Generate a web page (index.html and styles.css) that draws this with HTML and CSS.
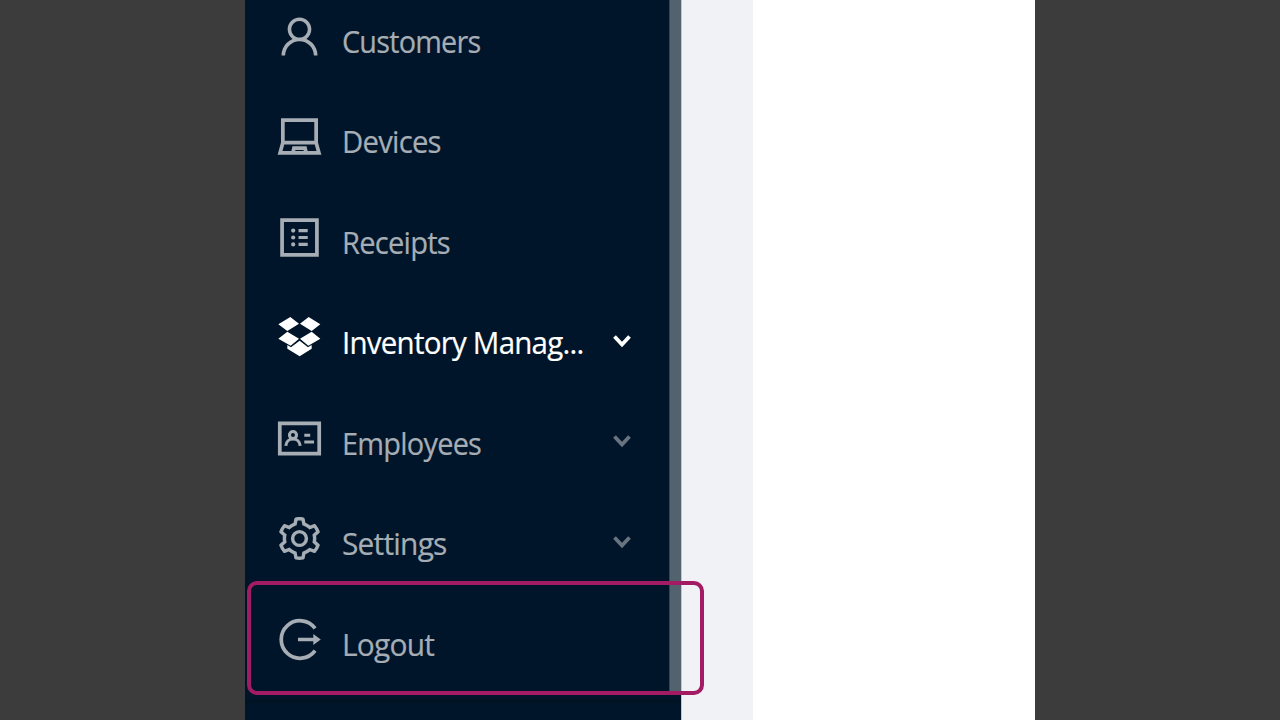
FILE: index.html
```html
<!DOCTYPE html>
<html lang="en">
<head>
<meta charset="utf-8">
<title>Menu</title>
<link rel="stylesheet" href="styles.css">
</head>
<body>
<div class="stage">
  <div class="app">
    <aside class="sidebar">
      <nav class="menu">
        <a class="item">
          <svg class="icon" viewBox="0 0 1024 1024"><path d="M858.5 763.6a374 374 0 00-80.6-119.5 375.63 375.63 0 00-119.5-80.6c-.4-.2-.8-.3-1.2-.5C719.5 518 760 444.7 760 362c0-137-111-248-248-248S264 225 264 362c0 82.7 40.5 156 102.8 201.1-.4.2-.8.3-1.2.5-44.8 18.9-85 46-119.5 80.6a375.63 375.63 0 00-80.6 119.5A371.7 371.7 0 00136 901.8a8 8 0 008 8.2h60c4.4 0 7.9-3.5 8-7.8 2-77.2 33-149.5 87.8-204.3 56.7-56.7 132-87.9 212.2-87.9s155.5 31.2 212.2 87.9C779 752.7 810 825 812 902.2c.1 4.4 3.6 7.8 8 7.8h60a8 8 0 008-8.2c-1-47.8-10.9-94.3-29.5-138.2zM512 534c-45.9 0-89.1-17.9-121.6-50.4S340 407.900 340 362c0-45.900 17.900-89.100 50.400-121.600S466.100 190 512 190s89.100 17.900 121.600 50.400S684 316.100 684 362c0 45.900-17.900 89.100-50.400 121.600S557.900 534 512 534z"/></svg>
          <span class="label customers">Customers</span>
        </a>
        <a class="item">
          <svg class="icon line" viewBox="0 0 1024 1024"><path d="M164 640V172h696v468zM164 640L106 852h812L860 640M376 846l20-90h232l20 90"/></svg>
          <span class="label devices">Devices</span>
        </a>
        <a class="item">
          <svg class="icon line" viewBox="0 0 1024 1024"><path d="M148 148h728v728H148z"/><path class="bars" d="M492 368h192M492 512h192M492 656h192"/><g class="dot"><circle cx="380" cy="368" r="44"/><circle cx="380" cy="512" r="44"/><circle cx="380" cy="656" r="44"/></g></svg>
          <span class="label receipts">Receipts</span>
        </a>
        <a class="item active">
          <svg class="icon" viewBox="0 0 147 147"><path d="M46 12l26 20-35 22L10 34zM101 12l35 22-26 20-35-22zM10 77l27-21 35 21-25 21zM136 77l-26-21-35 21 25 21zM74 83l25 20 11-7v11L74 130 37 107V96l11 7z"/></svg>
          <span class="label inventory">Inventory Manag...</span>
          <svg class="arrow" viewBox="0 0 20 14"><path d="M2.500 2.500L10 10.500l7.500-8"/></svg>
        </a>
        <a class="item">
          <svg class="icon line" viewBox="0 0 1024 1024"><path d="M100 196h824v632H100z"/><path class="bars" d="M612 446h124M612 586h204"/><circle class="bars" cx="376" cy="440" r="74"/><path class="bars" d="M226 664c8-86 68-142 150-142s142 56 150 142"/></svg>
          <span class="label employees">Employees</span>
          <svg class="arrow" viewBox="0 0 20 14"><path d="M2.500 2.500L10 10.500l7.500-8"/></svg>
        </a>
        <a class="item">
          <svg class="icon" viewBox="0 0 1024 1024"><path fill-rule="evenodd" d="M924.800 625.700l-65.500-56c3.100-19 4.700-38.400 4.700-57.800s-1.600-38.800-4.700-57.800l65.500-56a32.030 32.030 0 009.300-35.200l-.9-2.600a443.740 443.740 0 00-79.700-137.900l-1.800-2.100a32.120 32.120 0 00-35.100-9.500l-81.300 28.900c-30-24.600-63.500-44-99.700-57.600l-15.700-85a32.050 32.050 0 00-25.800-25.700l-2.700-.5c-52.100-9.400-106.900-9.400-159 0l-2.700.5a32.050 32.050 0 00-25.800 25.700l-15.800 85.400a351.860 351.860 0 00-99 57.400l-81.900-29.100a32 32 0 00-35.100 9.500l-1.800 2.100a446.020 446.020 0 00-79.700 137.900l-.9 2.600c-4.500 12.500-.8 26.500 9.300 35.200l66.300 56.600c-3.100 18.800-4.600 38-4.600 57.100 0 19.200 1.500 38.400 4.600 57.100L99 625.500a32.030 32.030 0 00-9.300 35.200l.9 2.600c18.100 50.400 44.900 96.900 79.700 137.900l1.800 2.100a32.120 32.120 0 0035.100 9.500l81.900-29.100c29.800 24.500 63.100 43.900 99 57.400l15.800 85.400a32.050 32.050 0 0025.800 25.700l2.700.5a449.400 449.400 0 00159 0l2.700-.5a32.050 32.050 0 0025.800-25.700l15.700-85a350 350 0 0099.700-57.600l81.300 28.900a32 32 0 0035.100-9.500l1.800-2.100c34.800-41.100 61.600-87.500 79.700-137.900l.9-2.600c4.500-12.300.8-26.300-9.300-35zM788.300 465.900c2.500 15.100 3.800 30.600 3.800 46.100s-1.300 31-3.800 46.100l-6.600 40.100 74.700 63.900a370.030 370.030 0 01-42.600 73.600L721 702.800l-31.400 25.800c-23.900 19.600-50.500 35-79.300 45.800l-38.100 14.300-17.900 97a377.500 377.500 0 01-85 0l-17.900-97.200-37.800-14.500c-28.500-10.800-55-26.200-78.700-45.700l-31.400-25.900-93.400 33.200c-17-22.900-31.200-47.600-42.600-73.600l75.500-64.500-6.500-40c-2.400-14.900-3.700-30.300-3.700-45.500 0-15.300 1.200-30.600 3.700-45.500l6.500-40-75.500-64.500c11.300-26.100 25.600-50.700 42.600-73.600l93.400 33.200 31.400-25.900c23.700-19.500 50.200-34.900 78.700-45.700l37.900-14.300 17.900-97.200c28.100-3.200 56.800-3.200 85 0l17.900 97 38.100 14.300c28.700 10.800 55.400 26.200 79.300 45.800l31.400 25.800 92.800-32.900c17 22.900 31.200 47.600 42.600 73.600L781.800 426z"/><circle class="ring" cx="512" cy="512" r="144"/></svg>
          <span class="label settings">Settings</span>
          <svg class="arrow" viewBox="0 0 20 14"><path d="M2.500 2.500L10 10.500l7.500-8"/></svg>
        </a>
        <a class="item">
          <svg class="icon line" viewBox="0 0 1024 1024"><path d="M838 280A392 392 0 1 0 838 744M480 512h350"/><path class="dot" d="M800 396l156 116-156 116z"/></svg>
          <span class="label logout">Logout</span>
        </a>
      </nav>
      <div class="scrollbar"></div>
      <div class="footer"></div>
    </aside>
    <div class="gutter"></div>
    <main class="content"></main>
    <div class="highlight"></div>
  </div>
</div>
</body>
</html>
```
FILE: styles.css
```css
body { margin: 0; font-family: "Open Sans", "Noto Sans", sans-serif; }
.stage { height: 720px; background: #3c3c3c; display: flex; justify-content: center; overflow: hidden; }
.app { position: relative; width: 790px; height: 720px; display: flex; background: #fff; overflow: hidden; }
.sidebar { width: 436px; height: 720px; background: #001529; display: grid; grid-template-columns: 424px 12px; grid-template-rows: 691px 29px; }
.menu { margin-top: -14.2px; }
.item { height: 100.5px; display: flex; align-items: center; padding-left: 30px; color: #a6adb4; }
.active { color: #fff; }
.icon { width: 49px; height: 49px; flex: none; fill: currentColor; }
.line { fill: none; stroke: currentColor; stroke-width: 78; }
.bars { stroke-width: 64; }
.dot { fill: currentColor; stroke: none; }
.ring { fill: none; stroke: currentColor; stroke-width: 72; }
.label { margin-left: 17.5px; padding-top: 9px; width: 270px; font-size: 30.5px; line-height: 40px; letter-spacing: -0.8px; white-space: nowrap; transform-origin: 0 50%; -webkit-text-stroke: 0.2px currentColor; }
.customers { transform: scaleX(0.943); }
.devices { transform: scaleX(0.96); }
.receipts { transform: scaleX(0.955); }
.inventory { transform: scaleX(0.968); }
.employees { transform: scaleX(0.948); }
.settings { transform: scaleX(0.98); }
.logout { transform: scaleX(0.98); }
.arrow { width: 20px; height: 14px; margin-top: 6px; fill: none; stroke: #68747f; stroke-width: 3.8; }
.active .arrow { stroke: #fff; }
.scrollbar { background: #53626f; box-shadow: inset 1px 0 #34465a; }
.footer { grid-column: 1 / -1; background: linear-gradient(#001529 8px, #001220 10px, #001529 13px); }
.gutter { width: 72px; background: #f0f2f5; box-shadow: inset 1px 0 #c0c6cc; }
.content { flex: 1; background: #fff; }
.highlight { position: absolute; left: 2px; top: 581px; width: 457px; height: 114px; box-sizing: border-box; border: 4px solid #a31c63; border-radius: 10px; }
```
